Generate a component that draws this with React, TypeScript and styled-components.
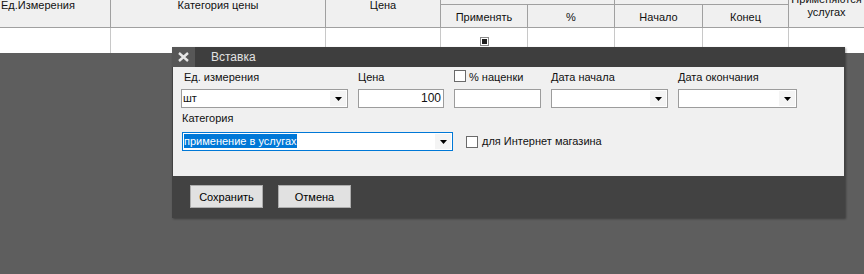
import React from 'react';
import styled, { createGlobalStyle } from 'styled-components';

const GlobalStyle = createGlobalStyle`
  html, body, #root { margin: 0; padding: 0; height: 100%; }
  body {
    background: #5e5e5e;
    font-family: "Liberation Sans", Arial, sans-serif;
    font-size: 11px;
    color: #111;
    overflow: hidden;
  }
  * { box-sizing: border-box; }
`;

const Page = styled.div`
  position: relative;
  height: 100%;
  display: flex;
  flex-direction: column;
`;

const cols = '111px 215px 115px 87px 87px 88px 86px 1fr';

const HeaderGrid = styled.div`
  display: grid;
  grid-template-columns: ${cols};
  grid-template-rows: 5px 22px;
  background: #f0f0f0;
  border-bottom: 1px solid #a0a0a0;
  overflow: hidden;
`;

const SpanHead = styled.div<{ $col: number; $left?: boolean; $last?: boolean }>`
  grid-column: ${(p) => p.$col};
  grid-row: 1 / span 2;
  border-right: ${(p) => (p.$last ? 'none' : '1px solid #a0a0a0')};
  overflow: hidden;
  text-align: ${(p) => (p.$left ? 'left' : 'center')};
  padding-left: ${(p) => (p.$left ? '1px' : '0')};
  white-space: nowrap;
`;

const SpanText = styled.div<{ $shift: number }>`
  margin-top: ${(p) => p.$shift}px;
  line-height: 13px;
`;

const GroupHead = styled.div<{ $col: string }>`
  grid-column: ${(p) => p.$col};
  grid-row: 1;
  border-right: 1px solid #a0a0a0;
  border-bottom: 1px solid #a0a0a0;
`;

const SubHead = styled.div<{ $col: number }>`
  grid-column: ${(p) => p.$col};
  grid-row: 2;
  border-right: 1px solid #a0a0a0;
  display: flex;
  align-items: center;
  justify-content: center;
  padding-top: 1px;
  white-space: nowrap;
`;

const DataRow = styled.div`
  display: grid;
  grid-template-columns: ${cols};
  height: 25px;
  background: #fff;
`;

const DataCell = styled.div<{ $last?: boolean }>`
  border-right: ${(p) => (p.$last ? 'none' : '1px solid #c8c8c8')};
  display: flex;
  justify-content: center;
  padding-top: 9px;
`;

const MiniCheck = styled.div`
  width: 9px;
  height: 9px;
  border: 1px solid #8a8a8a;
  background: #fff;
  display: flex;
  align-items: center;
  justify-content: center;
  &::after {
    content: '';
    width: 5px;
    height: 5px;
    background: #1e1e1e;
  }
`;

const Backdrop = styled.div`
  flex: 1;
  background: #5e5e5e;
`;

/* ---------- Dialog ---------- */

const Window = styled.div`
  position: absolute;
  left: 172px;
  top: 47px;
  width: 673px;
  background: #424242;
  display: flex;
  flex-direction: column;
  box-shadow: 1px 1px 2px rgba(0, 0, 0, 0.35);
`;

const TitleBar = styled.div`
  height: 20px;
  display: flex;
  align-items: stretch;
  background: #3e3e3e;
`;

const CloseBox = styled.div`
  width: 23px;
  background: #575757;
  display: flex;
  align-items: center;
  justify-content: center;
`;

const Title = styled.div`
  margin-left: 16px;
  line-height: 20px;
  font-size: 12px;
  color: #e2e2e2;
`;

const Body = styled.div`
  margin: 0 1px;
  height: 109px;
  background: #f0f0f0;
  padding: 4px 0 0 8px;
  display: flex;
  flex-direction: column;
`;

const FieldsRow = styled.div`
  display: grid;
  grid-template-columns: 167px 86px 87px 117px 119px;
  column-gap: 10px;
`;

const Field = styled.div`
  display: flex;
  flex-direction: column;
  gap: 5px;
`;

const Label = styled.div<{ $indent?: number }>`
  height: 13px;
  line-height: 13px;
  padding-left: ${(p) => p.$indent ?? 0}px;
  white-space: nowrap;
`;

const CheckLabelRow = styled.div<{ $gap: number; $lift?: number }>`
  display: flex;
  align-items: center;
  gap: ${(p) => p.$gap}px;
  white-space: nowrap;
  height: 13px;
  line-height: 13px;
  & > span:first-child {
    margin-top: ${(p) => -(p.$lift ?? 0)}px;
  }
`;

const CheckBox = styled.span<{ $size: number }>`
  display: inline-block;
  width: ${(p) => p.$size}px;
  height: ${(p) => p.$size}px;
  border: 1px solid #6a6a6a;
  background: #fff;
  flex: none;
`;

const Combo = styled.div<{ $focus?: boolean }>`
  height: 19px;
  background: #fff;
  border: 1px solid ${(p) => (p.$focus ? '#0078d7' : '#9c9c9c')};
  display: flex;
  align-items: stretch;
`;

const ComboText = styled.div`
  flex: 1;
  padding-left: 1px;
  line-height: 17px;
  white-space: nowrap;
  overflow: hidden;
`;

const Selected = styled.span`
  background: #0078d7;
  color: #fff;
  padding: 1px 0;
`;

const ArrowButton = styled.div`
  width: 16px;
  margin: 1px;
  background: #f4f4f4;
  display: flex;
  align-items: center;
  justify-content: center;
`;

const TextInput = styled.div<{ $right?: boolean }>`
  height: 19px;
  background: #fff;
  border: 1px solid #9c9c9c;
  line-height: 17px;
  padding: 0 2px;
  text-align: ${(p) => (p.$right ? 'right' : 'left')};
  font-size: 12px;
`;

const SecondRow = styled.div`
  margin-top: 4px;
  display: flex;
  align-items: flex-end;
  gap: 13px;
`;

const CategoryField = styled.div`
  width: 271px;
  margin-left: 1px;
  display: flex;
  flex-direction: column;
  gap: 7px;
`;

const InlineCheck = styled.div`
  height: 19px;
  display: flex;
  align-items: center;
`;

const Footer = styled.div`
  height: 42px;
  padding: 9px 0 0 18px;
  display: flex;
  gap: 15px;
`;

const Button = styled.button`
  width: 73px;
  height: 23px;
  background: #e1e1e1;
  border: 1px solid #adadad;
  font-family: "Liberation Sans", Arial, sans-serif;
  font-size: 11px;
  color: #000;
  padding: 0;
`;

const Arrow = () => (
  <svg width="7" height="4" viewBox="0 0 7 4">
    <path d="M0 0H7L3.5 4Z" fill="#000" />
  </svg>
);

const CloseIcon = () => (
  <svg width="11" height="10" viewBox="0 0 11 10">
    <path d="M1 1L10 9M10 1L1 9" stroke="#e6e6e6" strokeWidth="2.4" />
  </svg>
);

export default function App() {
  return (
    <>
      <GlobalStyle />
      <Page>
        <HeaderGrid>
          <SpanHead $col={1} $left>
            <SpanText $shift={-1}>Ед.Измерения</SpanText>
          </SpanHead>
          <SpanHead $col={2}>
            <SpanText $shift={-1}>Категория цены</SpanText>
          </SpanHead>
          <SpanHead $col={3}>
            <SpanText $shift={-1}>Цена</SpanText>
          </SpanHead>
          <GroupHead $col="4 / span 2" />
          <GroupHead $col="6 / span 2" />
          <SubHead $col={4}>Применять</SubHead>
          <SubHead $col={5}>%</SubHead>
          <SubHead $col={6}>Начало</SubHead>
          <SubHead $col={7}>Конец</SubHead>
          <SpanHead $col={8} $last>
            <SpanText $shift={-7}>
              Применяются
              <br />
              услугах
            </SpanText>
          </SpanHead>
        </HeaderGrid>
        <DataRow>
          <DataCell />
          <DataCell />
          <DataCell />
          <DataCell>
            <MiniCheck />
          </DataCell>
          <DataCell />
          <DataCell />
          <DataCell />
          <DataCell $last />
        </DataRow>
        <Backdrop />

        <Window>
          <TitleBar>
            <CloseBox>
              <CloseIcon />
            </CloseBox>
            <Title>Вставка</Title>
          </TitleBar>
          <Body>
            <FieldsRow>
              <Field>
                <Label $indent={3}>Ед. измерения</Label>
                <Combo>
                  <ComboText>шт</ComboText>
                  <ArrowButton>
                    <Arrow />
                  </ArrowButton>
                </Combo>
              </Field>
              <Field>
                <Label>Цена</Label>
                <TextInput $right>100</TextInput>
              </Field>
              <Field>
                <CheckLabelRow $gap={3} $lift={4}>
                  <CheckBox $size={12} />
                  <span>% наценки</span>
                </CheckLabelRow>
                <TextInput />
              </Field>
              <Field>
                <Label>Дата начала</Label>
                <Combo>
                  <ComboText />
                  <ArrowButton>
                    <Arrow />
                  </ArrowButton>
                </Combo>
              </Field>
              <Field>
                <Label>Дата окончания</Label>
                <Combo>
                  <ComboText />
                  <ArrowButton>
                    <Arrow />
                  </ArrowButton>
                </Combo>
              </Field>
            </FieldsRow>
            <SecondRow>
              <CategoryField>
                <Label>Категория</Label>
                <Combo $focus>
                  <ComboText>
                    <Selected>применение в услугах</Selected>
                  </ComboText>
                  <ArrowButton>
                    <Arrow />
                  </ArrowButton>
                </Combo>
              </CategoryField>
              <InlineCheck>
                <CheckLabelRow $gap={4}>
                  <CheckBox $size={12} />
                  <span>для Интернет магазина</span>
                </CheckLabelRow>
              </InlineCheck>
            </SecondRow>
          </Body>
          <Footer>
            <Button>Сохранить</Button>
            <Button>Отмена</Button>
          </Footer>
        </Window>
      </Page>
    </>
  );
}
